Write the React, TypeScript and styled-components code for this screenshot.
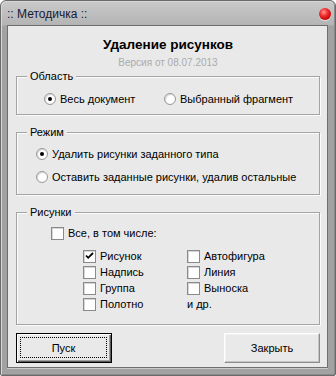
import React from "react";
import styled, { createGlobalStyle } from "styled-components";

const Global = createGlobalStyle`
  html, body { margin: 0; padding: 0; background: #ffffff; }
  body { font-family: "Liberation Sans", Arial, sans-serif; }
  * { box-sizing: border-box; }
`;

const Window = styled.div`
  width: 336px;
  height: 376px;
  display: flex;
  flex-direction: column;
  border: 1px solid #6a6a6a;
  border-radius: 6px 6px 2px 2px;
  background: linear-gradient(#cacaca 0px, #b4b4b4 24px, #a2a2a2 25px, #a2a2a2 100%);
  box-shadow: inset 1px 1px 0 #d8d8d8, inset -1px -1px 0 #8a8a8a;
  overflow: hidden;
`;

const TitleBar = styled.div`
  height: 24px;
  display: flex;
  align-items: center;
  justify-content: space-between;
  padding: 1px 4px 0 6px;
  flex: none;
`;

const TitleText = styled.span`
  font-family: "Liberation Sans", Arial, sans-serif;
  font-size: 12px;
  color: #141a33;
`;

const CloseDot = styled.span`
  width: 12px;
  height: 12px;
  border-radius: 50%;
  background: radial-gradient(circle at 40% 35%, #ff9a9a 0%, #f23030 35%, #c50000 75%, #8a0000 100%);
  box-shadow: 0 1px 1px rgba(255,255,255,0.7);
`;

const Client = styled.div`
  flex: 1;
  margin: 0 7px 7px 6px;
  background: #e9e9e9;
  border: 1px solid #6e6e6e;
  box-shadow: 0 1px 0 #c9c9c9;
  display: flex;
  flex-direction: column;
  padding: 0 7px 0 8px;
`;

const Header = styled.div`
  display: flex;
  flex-direction: column;
  align-items: center;
  padding-top: 11px;
  height: 50px;
`;

const Heading = styled.div`
  font-family: "Liberation Sans", Arial, sans-serif;
  font-weight: bold;
  font-size: 13.5px;
  color: #000;
  line-height: 16px;
`;

const Version = styled.div`
  font-family: "Liberation Sans", Arial, sans-serif;
  font-size: 10px;
  color: #ababab;
  line-height: 12px;
  margin-top: 4px;
`;

const Group = styled.div<{ $h: number; $gap: number }>`
  position: relative;
  height: ${(p) => p.$h}px;
  margin-top: ${(p) => p.$gap}px;
  border: 1px solid #a4a4a4;
  box-shadow: inset 1px 1px 0 #fbfbfb, 1px 1px 0 #fbfbfb;
  flex: none;
`;

const Legend = styled.span`
  position: absolute;
  left: 10px;
  top: -8px;
  padding: 0 3px;
  background: #e9e9e9;
  font-family: "Liberation Sans", Arial, sans-serif;
  font-size: 11px;
  line-height: 14px;
  color: #000;
`;

const AreaBody = styled.div`
  display: grid;
  grid-template-columns: 120px auto;
  align-items: center;
  height: 100%;
  padding: 6px 0 0 27px;
`;

const ModeBody = styled.div`
  display: flex;
  flex-direction: column;
  padding: 9px 0 0 19px;
`;

const Row = styled.label<{ $h: number }>`
  display: flex;
  align-items: center;
  height: ${(p) => p.$h}px;
  font-family: "Liberation Sans", Arial, sans-serif;
  font-size: 11px;
  color: #000;
  white-space: nowrap;
`;

const Radio = styled.span<{ $on?: boolean }>`
  width: 12px;
  height: 12px;
  border-radius: 50%;
  flex: none;
  margin-right: 4px;
  background: radial-gradient(circle, #ffffff 0%, #ffffff 55%, #e6e6e6 100%);
  border: 1px solid #9a9a9a;
  box-shadow: inset 1px 1px 1px rgba(0,0,0,0.15);
  display: flex;
  align-items: center;
  justify-content: center;
  &::after {
    content: "";
    width: 4px;
    height: 4px;
    border-radius: 50%;
    background: ${(p) => (p.$on ? "#000" : "transparent")};
  }
`;

const Box = styled.span`
  width: 13px;
  height: 13px;
  flex: none;
  margin-right: 4px;
  background: #fff;
  border: 1px solid #8a8a8a;
  box-shadow: inset 1px 1px 0 #d6d6d6;
  display: flex;
  align-items: center;
  justify-content: center;
`;

const PicsBody = styled.div`
  display: flex;
  flex-direction: column;
  padding: 12px 0 0 34px;
`;

const Grid = styled.div`
  display: grid;
  grid-template-columns: 104px auto;
  grid-auto-rows: 16px;
  padding: 7px 0 0 66px;
`;

const Extra = styled.span`
  display: flex;
  align-items: center;
  font-family: "Liberation Sans", Arial, sans-serif;
  font-size: 11px;
  color: #000;
`;

const Buttons = styled.div`
  display: flex;
  justify-content: space-between;
  margin-top: 8px;
`;

const Button = styled.button<{ $default?: boolean }>`
  width: 96px;
  height: 30px;
  padding: 0;
  position: relative;
  font-family: "Liberation Sans", Arial, sans-serif;
  font-size: 11px;
  color: #000;
  background: #e9e9e9;
  border: 1px solid;
  border-color: ${(p) => (p.$default ? "#000" : "#ffffff #8c8c8c #8c8c8c #ffffff")};
  box-shadow: ${(p) =>
    p.$default
      ? "inset 1px 1px 0 #ffffff, inset -1px -1px 0 #5a5a5a, inset -2px -2px 0 #a0a0a0"
      : "inset -1px -1px 0 #c4c4c4, inset 1px 1px 0 #f2f2f2"};
  outline: none;
`;

const Focus = styled.span`
  position: absolute;
  inset: 3px 4px 4px 3px;
  border: 1px dotted #000;
  display: flex;
  align-items: center;
  justify-content: center;
`;

const Check = () => (
  <svg width="9" height="8" viewBox="0 0 9 8">
    <path d="M1 3.5 L3.2 5.8 L8 1" fill="none" stroke="#000" strokeWidth="1.8" />
  </svg>
);

const items: [string, boolean][] = [
  ["Рисунок", true],
  ["Автофигура", false],
  ["Надпись", false],
  ["Линия", false],
  ["Группа", false],
  ["Выноска", false],
];

export default function App() {
  return (
    <>
      <Global />
      <Window>
        <TitleBar>
          <TitleText>:: Методичка ::</TitleText>
          <CloseDot />
        </TitleBar>
        <Client>
          <Header>
            <Heading>Удаление рисунков</Heading>
            <Version>Версия от 08.07.2013</Version>
          </Header>
          <Group $h={39} $gap={0}>
            <Legend>Область</Legend>
            <AreaBody>
              <Row $h={16}>
                <Radio $on />
                Весь документ
              </Row>
              <Row $h={16}>
                <Radio />
                Выбранный фрагмент
              </Row>
            </AreaBody>
          </Group>
          <Group $h={63} $gap={17}>
            <Legend>Режим</Legend>
            <ModeBody>
              <Row $h={23}>
                <Radio $on />
                Удалить рисунки заданного типа
              </Row>
              <Row $h={23}>
                <Radio />
                Оставить заданные рисунки, удалив остальные
              </Row>
            </ModeBody>
          </Group>
          <Group $h={113} $gap={17}>
            <Legend>Рисунки</Legend>
            <PicsBody>
              <Row $h={16}>
                <Box />
                Все, в том числе:
              </Row>
            </PicsBody>
            <Grid>
              {items.map(([t, on]) => (
                <Row $h={16} key={t}>
                  <Box>{on && <Check />}</Box>
                  {t}
                </Row>
              ))}
              <Row $h={16}>
                <Box />
                Полотно
              </Row>
              <Extra>и др.</Extra>
            </Grid>
          </Group>
          <Buttons>
            <Button $default>
              <Focus>Пуск</Focus>
            </Button>
            <Button>Закрыть</Button>
          </Buttons>
        </Client>
      </Window>
    </>
  );
}
